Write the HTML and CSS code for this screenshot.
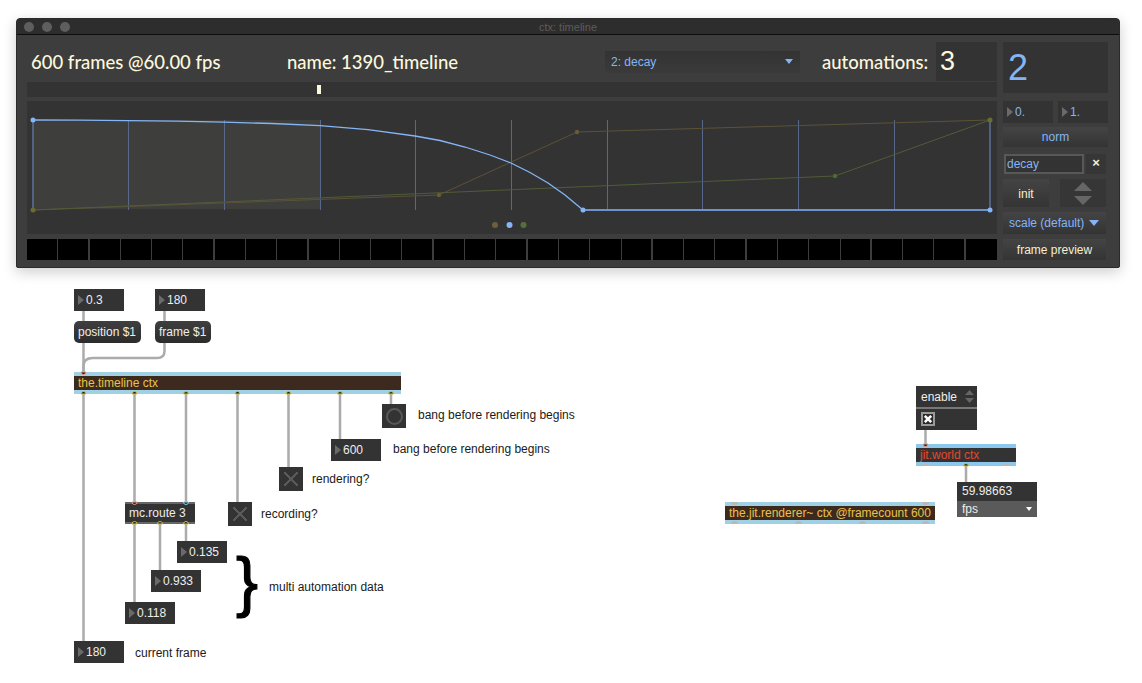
FILE: index.html
```html
<!DOCTYPE html>
<html lang="en">

<head>
	<meta charset="UTF-8">
	<title>ctx: timeline</title>
	<link rel="stylesheet" href="styles.css">
</head>

<body>
	<!-- bpatcher window -->
	<div class="window">
		<div class="titlebar">
			<div class="lights"><i></i><i></i><i></i></div>
			<div class="title">ctx: timeline</div>
		</div>
		<div class="content">
			<div class="main">
				<div class="header">
					<div class="head-text frames">600 frames @60.00 fps</div>
					<div class="head-text name">name: 1390_timeline</div>
					<div class="dropdown"><span>2: decay</span><b class="arrow"></b></div>
					<div class="head-text automations">automations:</div>
					<div class="auto-count">3</div>
				</div>
				<div class="strip"><div class="marker"></div></div>
				<svg class="graph" width="970" height="133" viewBox="27 101 970 133">
					<rect x="33" y="120" width="287" height="89" fill="#3e3e3d" />
					<g stroke="#56698a" stroke-width="1">
						<path d="M128.5 120V210M224.5 120V210M320.5 120V210M415.5 120V210M511.5 120V210M607.5 120V210M702.5 120V210M798.5 120V210M894.5 120V210" />
					</g>
					<path d="M33 120V210M990 120V210" stroke="#5c7299" stroke-width="1.5" fill="none" />
					<polyline points="33,210 439,195 577,132 990,120" fill="none" stroke="#5c5238" stroke-width="1" />
					<polyline points="33,210 835,176 990,120" fill="none" stroke="#505c38" stroke-width="1" />
					<path d="M583 210H990" stroke="#6d92cc" stroke-width="2" />
					<polyline points="33,120 80,120.2 128,120.6 176,121.2 224,122.1 272,123.5 320,125.7 368,129.6 415,136 440,140.5 465,147 490,155 511,163 530,172.5 548,183 565,195 583,210" fill="none" stroke="#85b5f5" stroke-width="1.3" />
					<circle cx="33" cy="120" r="2.5" fill="#85b5f5" />
					<circle cx="583" cy="210" r="2.5" fill="#85b5f5" />
					<circle cx="990" cy="210" r="2.5" fill="#85b5f5" />
					<circle cx="33" cy="210" r="2.5" fill="#6b6b32" />
					<circle cx="990" cy="120" r="2.5" fill="#6b6b32" />
					<circle cx="439" cy="195" r="2.2" fill="#6a5a36" />
					<circle cx="577" cy="132" r="2.2" fill="#6a5a36" />
					<circle cx="835" cy="176" r="2.2" fill="#4f6a32" />
					<circle cx="495" cy="225" r="3" fill="#6e5f3a" />
					<circle cx="509.5" cy="225" r="3" fill="#85b5f5" />
					<circle cx="523.5" cy="225" r="3" fill="#56703a" />
				</svg>
				<div class="frames-strip">
					<i></i><i class="thick"></i><i></i><i></i><i></i><i class="thick"></i><i></i><i></i><i class="thick"></i>
					<i></i><i></i><i></i><i class="thick"></i><i></i><i></i><i class="thick"></i><i></i><i></i><i></i>
					<i class="thick"></i><i></i><i></i><i class="thick"></i><i></i><i></i><i></i><i class="thick"></i>
					<i></i><i></i><i class="thick"></i><i class="last"></i>
				</div>
			</div>

			<div class="side">
				<div class="big-num">2</div>
				<div class="side-row range">
					<div class="side-num">0.</div>
					<div class="side-num">1.</div>
				</div>
				<div class="btn blue norm">norm</div>
				<div class="side-row name-row">
					<div class="textbox">decay</div>
					<div class="clear">&times;</div>
				</div>
				<div class="side-row init-row">
					<div class="btn init">init</div>
					<div class="stepper">
						<svg width="18" height="23" viewBox="0 0 18 23">
							<path d="M9 0L18 9H0Z" fill="#666" />
							<path d="M0 14H18L9 23Z" fill="#666" />
						</svg>
					</div>
				</div>
				<div class="btn blue scale"><span>scale (default)</span><b class="arrow big"></b></div>
				<div class="btn preview">frame preview</div>
			</div>
		</div>
	</div>

	<!-- patcher canvas -->
	<div class="patcher">
		<div class="num n-pos">0.3</div>
		<div class="num n-frame">180</div>
		<div class="msg m-pos">position $1</div>
		<div class="msg m-frame">frame $1</div>
		<div class="obj timeline">the.timeline ctx</div>
		<div class="bang"><i></i></div>
		<div class="num n-600">600</div>
		<div class="toggle t-render"></div>
		<div class="toggle t-record"></div>
		<div class="route">mc.route 3</div>
		<div class="num n-135">0.135</div>
		<div class="num n-933">0.933</div>
		<div class="num n-118">0.118</div>
		<div class="num n-cur">180</div>
		<div class="brace">}</div>

		<div class="label l-bang1">bang before rendering begins</div>
		<div class="label l-bang2">bang before rendering begins</div>
		<div class="label l-render">rendering?</div>
		<div class="label l-record">recording?</div>
		<div class="label l-multi">multi automation data</div>
		<div class="label l-current">current frame</div>

		<div class="enable">
			<div class="enable-top">
				<span>enable</span>
				<svg width="9" height="13" viewBox="0 0 9 13">
					<path d="M4.5 0L9 5H0Z" fill="#666" />
					<path d="M0 8H9L4.5 13Z" fill="#666" />
				</svg>
			</div>
			<div class="enable-bottom">
				<svg class="check" width="14" height="14" viewBox="0 0 14 14">
					<rect x="1" y="1" width="12" height="12" fill="#2a2a2a" stroke="#9a9a9a" stroke-width="2" />
					<path d="M3.8 3.8L10.2 10.2M10.2 3.8L3.8 10.2" stroke="#fff" stroke-width="2.6" />
				</svg>
			</div>
		</div>
		<div class="world">jit.world ctx</div>
		<div class="fps">
			<div class="fps-top">59.98663</div>
			<div class="fps-bottom"><span>fps</span><b class="arrow white"></b></div>
		</div>
		<div class="obj renderer">the.jit.renderer~ ctx @framecount 600</div>

		<svg class="cords" width="1142" height="415" viewBox="0 268 1142 415">
			<g fill="none" stroke="#ababab" stroke-width="2.5">
				<path d="M83.5 311V321M164.5 311V321" />
				<path d="M83.5 343V372" />
				<path d="M164.5 343V351Q164.5 358 157 358H93Q83.5 358 83.5 366V372" />
				<path d="M83.5 394V641M134.5 394V502M186 394V502M237.5 394V502M288.5 394V467M340 394V439M391 394V404" />
				<path d="M134.5 524V602M160 524V570M186 524V541" />
				<path d="M925.5 430V444M966 466V482" />
			</g>
			<g stroke-width="1">
				<path d="M81 372a2.5 2.5 0 0 0 5 0Z" fill="#2a1a14" stroke="#e89a8a" />
				<path d="M81 394a2.5 2.5 0 0 1 5 0Z" fill="#222" stroke="#c9c24a" />
				<path d="M132 394a2.5 2.5 0 0 1 5 0Z" fill="#222" stroke="#c9c24a" />
				<path d="M183.5 394a2.5 2.5 0 0 1 5 0Z" fill="#222" stroke="#c9c24a" />
				<path d="M235 394a2.5 2.5 0 0 1 5 0Z" fill="#222" stroke="#c9c24a" />
				<path d="M286 394a2.5 2.5 0 0 1 5 0Z" fill="#222" stroke="#c9c24a" />
				<path d="M337.5 394a2.5 2.5 0 0 1 5 0Z" fill="#222" stroke="#c9c24a" />
				<path d="M388.5 394a2.5 2.5 0 0 1 5 0Z" fill="#222" stroke="#c9c24a" />
				<path d="M132 502a2.5 2.5 0 0 0 5 0Z" fill="#222" stroke="#e89a8a" />
				<path d="M183.5 502a2.5 2.5 0 0 0 5 0Z" fill="#222" stroke="#8fd3e8" />
				<path d="M132 524a2.5 2.5 0 0 1 5 0Z" fill="#222" stroke="#c9c24a" />
				<path d="M157.5 524a2.5 2.5 0 0 1 5 0Z" fill="#222" stroke="#c9c24a" />
				<path d="M183.5 524a2.5 2.5 0 0 1 5 0Z" fill="#222" stroke="#c9c24a" />
				<path d="M923 444a2.5 2.5 0 0 0 5 0Z" fill="#222" stroke="#e89a8a" />
				<path d="M963.5 466a2.5 2.5 0 0 1 5 0Z" fill="#222" stroke="#c9c24a" />
			</g>
			<g fill="#b8b8b8">
				<path d="M922 466a3.5 3 0 0 1 7 0ZM1002.5 466a3.5 3 0 0 1 7 0Z" />
				<path d="M731 502a3.5 3 0 0 0 7 0ZM922 502a3.5 3 0 0 0 7 0Z" />
				<path d="M731 524a3.5 3 0 0 1 7 0ZM795 524a3.5 3 0 0 1 7 0ZM859 524a3.5 3 0 0 1 7 0ZM922 524a3.5 3 0 0 1 7 0Z" />
			</g>
		</svg>
	</div>
</body>

</html>
```
FILE: styles.css
```css
* {
	box-sizing: border-box;
}

body {
	margin: 0;
	width: 1142px;
	height: 683px;
	overflow: hidden;
	background: #fff;
	font-family: "Liberation Sans", Arial, sans-serif;
	font-size: 12px;
}

i,
b {
	display: block;
}

/* window */
.window {
	width: 1104px;
	height: 250px;
	margin: 18px 0 0 16px;
	background: #3d3d3d;
	border: 1px solid #2a2a2a;
	border-radius: 4px 4px 2px 2px;
	box-shadow: 0 4px 14px rgba(0, 0, 0, 0.2);
}

.titlebar {
	position: relative;
	height: 16px;
	background: #2d2d2d;
	border-bottom: 1px solid #0c0c0c;
	border-radius: 3px 3px 0 0;
}

.lights {
	display: flex;
	gap: 8px;
	padding: 3px 0 0 7px;
}

.lights i {
	width: 10px;
	height: 10px;
	border-radius: 50%;
	background: #5e5e5e;
}

.title {
	position: absolute;
	top: 1px;
	left: -1px;
	width: 1104px;
	text-align: center;
	font-size: 11px;
	line-height: 14px;
	color: #5c5c5c;
}

.content {
	display: flex;
	gap: 6px;
	padding: 7px 0 0 10px;
}

.main {
	width: 970px;
}

.header {
	display: flex;
	align-items: center;
	height: 39px;
	padding-left: 4px;
}

.head-text {
	font-family: Lato, sans-serif;
	font-size: 18.5px;
	font-weight: 500;
	color: #fdf8dd;
	white-space: nowrap;
}

.frames {
	width: 256px;
}

.name {
	width: 318px;
}

.dropdown {
	display: flex;
	align-items: center;
	justify-content: space-between;
	width: 195px;
	height: 22px;
	padding: 0 7px 0 6px;
	background: linear-gradient(#333, #3a3a3a);
	color: #85b5f5;
}

.arrow {
	width: 0;
	height: 0;
	border-left: 4px solid transparent;
	border-right: 4px solid transparent;
	border-top: 5px solid #85b5f5;
}

.arrow.big {
	border-left-width: 5px;
	border-right-width: 5px;
	border-top-width: 6px;
}

.arrow.white {
	border-left-width: 3px;
	border-right-width: 3px;
	border-top-width: 4px;
	border-top-color: #fff;
}

.automations {
	width: 114px;
	margin-left: 22px;
}

.auto-count {
	width: 61px;
	height: 39px;
	padding-left: 4px;
	background: #333;
	font-size: 27px;
	line-height: 39px;
	color: #fdf8dd;
}

.strip {
	display: flex;
	align-items: center;
	height: 15px;
	margin-top: 1px;
	padding-left: 290px;
	background: #333;
}

.marker {
	width: 4px;
	height: 9px;
	background: #fdf8dd;
}

.graph {
	display: block;
	margin-top: 4px;
	background: #333;
}

.frames-strip {
	display: grid;
	grid-template-columns: repeat(31, 1fr);
	height: 21px;
	margin-top: 5px;
}

.frames-strip i {
	background: #000;
	border-right: 1px solid #3d3d3d;
}

.frames-strip i.thick {
	border-right-width: 2px;
}

.frames-strip i.last {
	border-right: 0;
}

/* right column */
.side {
	width: 105px;
}

.big-num {
	height: 51px;
	padding: 5px 0 0 5px;
	background: #333;
	font-size: 36px;
	line-height: 42px;
	color: #85b5f5;
}

.side-row {
	display: flex;
}

.range {
	gap: 5px;
	margin-top: 8px;
}

.side-num {
	display: flex;
	align-items: center;
	gap: 2px;
	width: 50px;
	height: 22px;
	padding-left: 4px;
	background: #333;
	color: #85b5f5;
}

.side-num::before {
	content: "";
	border-left: 6px solid #6a6a6a;
	border-top: 5px solid transparent;
	border-bottom: 5px solid transparent;
}

.btn {
	display: flex;
	align-items: center;
	justify-content: center;
	background: linear-gradient(#444, #343434);
	color: #f5efd0;
}

.btn.blue {
	color: #85b5f5;
}

.norm {
	height: 20px;
	margin-top: 4px;
}

.name-row {
	margin-top: 7px;
	padding-left: 1px;
}

.textbox {
	width: 80px;
	height: 20px;
	padding-left: 1px;
	background: #333;
	border: 2px solid #585858;
	color: #85b5f5;
	line-height: 16px;
}

.clear {
	width: 20px;
	height: 20px;
	margin-left: 2px;
	background: #363636;
	color: #f5efd0;
	font-size: 13px;
	font-weight: bold;
	line-height: 18px;
	text-align: center;
}

.init-row {
	gap: 11px;
	margin-top: 5px;
}

.init {
	width: 46px;
	height: 28px;
	padding-top: 1px;
}

.stepper {
	display: flex;
	align-items: center;
	justify-content: center;
	width: 46px;
	height: 28px;
	background: #363636;
}

.stepper svg {
	display: block;
}

.scale {
	justify-content: space-between;
	width: 103px;
	height: 22px;
	margin-top: 5px;
	padding: 0 7px 0 6px;
}

.preview {
	width: 103px;
	height: 21px;
	margin-top: 5px;
}

/* patcher objects sit on a free canvas */
.patcher {
	position: relative;
	width: 1142px;
	height: 415px;
}

.cords {
	position: absolute;
	top: 0;
	left: 0;
}

.num,
.msg,
.obj,
.route,
.bang,
.toggle,
.brace,
.label,
.enable,
.world,
.fps {
	position: absolute;
}

.num {
	display: flex;
	align-items: center;
	gap: 2px;
	width: 50px;
	height: 22px;
	padding-left: 4px;
	background: #333;
	color: #eee;
}

.num::before {
	content: "";
	border-left: 6px solid #6a6a6a;
	border-top: 5px solid transparent;
	border-bottom: 5px solid transparent;
}

.n-pos { left: 74px; top: 21px; }
.n-frame { left: 155px; top: 21px; }
.n-600 { left: 331px; top: 171px; }
.n-135 { left: 177px; top: 273px; }
.n-933 { left: 151px; top: 302px; }
.n-118 { left: 125px; top: 334px; }
.n-cur { left: 74px; top: 373px; }

.msg {
	top: 53px;
	height: 22px;
	padding-left: 4px;
	background: linear-gradient(#3f3f3f, #2c2c2c);
	border-radius: 5px;
	color: #eee;
	line-height: 22px;
}

.m-pos { left: 74px; width: 67px; }
.m-frame { left: 155px; width: 56px; }

.obj {
	height: 22px;
	padding-left: 4px;
	background: #3c2a1e;
	border-top: 4px solid #9fd0e3;
	border-bottom: 4px solid #9fd0e3;
	color: #ecc04a;
	line-height: 14px;
}

.timeline { left: 74px; top: 104px; width: 327px; }
.renderer { left: 725px; top: 234px; width: 210px; }

.bang {
	left: 382px;
	top: 136px;
	display: flex;
	align-items: center;
	justify-content: center;
	width: 24px;
	height: 24px;
	background: #333;
}

.bang i {
	width: 17px;
	height: 17px;
	border: 2px solid #585858;
	border-radius: 50%;
}

.toggle {
	width: 24px;
	height: 24px;
	background:
		linear-gradient(45deg, transparent 46%, #5a5a5a 46%, #5a5a5a 54%, transparent 54%) center / 14px 14px no-repeat,
		linear-gradient(-45deg, transparent 46%, #5a5a5a 46%, #5a5a5a 54%, transparent 54%) center / 14px 14px no-repeat,
		#333;
}

.t-render { left: 279px; top: 199px; }
.t-record { left: 228px; top: 234px; }

.route {
	left: 125px;
	top: 234px;
	width: 70px;
	height: 22px;
	padding-left: 4px;
	background: #333;
	border-top: 2px solid #666;
	border-bottom: 2px solid #666;
	color: #eee;
	line-height: 19px;
}

.brace {
	left: 236px;
	top: 278px;
	font-size: 66px;
	line-height: 70px;
	color: #000;
	-webkit-text-stroke: 1.2px #000;
}

.label {
	line-height: 14px;
	color: #1a1a1a;
	white-space: nowrap;
}

.l-bang1 { left: 418px; top: 140px; }
.l-bang2 { left: 393px; top: 174px; }
.l-render { left: 312px; top: 204px; }
.l-record { left: 261px; top: 239px; }
.l-multi { left: 269px; top: 312px; }
.l-current { left: 135px; top: 378px; }

.enable {
	left: 916px;
	top: 118px;
	width: 61px;
	height: 44px;
	background: #333;
	color: #eee;
}

.enable-top {
	display: flex;
	align-items: center;
	justify-content: space-between;
	height: 23px;
	padding: 0 3px 0 5px;
	border-bottom: 2px solid #777;
}

.enable-bottom {
	padding: 3px 0 0 5px;
}

.check {
	display: block;
}

.world {
	left: 916px;
	top: 176px;
	width: 100px;
	height: 22px;
	padding-left: 4px;
	background: #333;
	border-top: 4px solid #8cc8ee;
	border-bottom: 4px solid #8cc8ee;
	color: #e2482e;
	line-height: 14px;
}

.fps {
	left: 957px;
	top: 214px;
	width: 80px;
	color: #eee;
}

.fps-top {
	height: 19px;
	padding-left: 5px;
	background: #333;
	line-height: 18px;
}

.fps-bottom {
	display: flex;
	align-items: center;
	justify-content: space-between;
	height: 16px;
	padding: 0 5px 0 5px;
	background: #5a5a5a;
}
```
